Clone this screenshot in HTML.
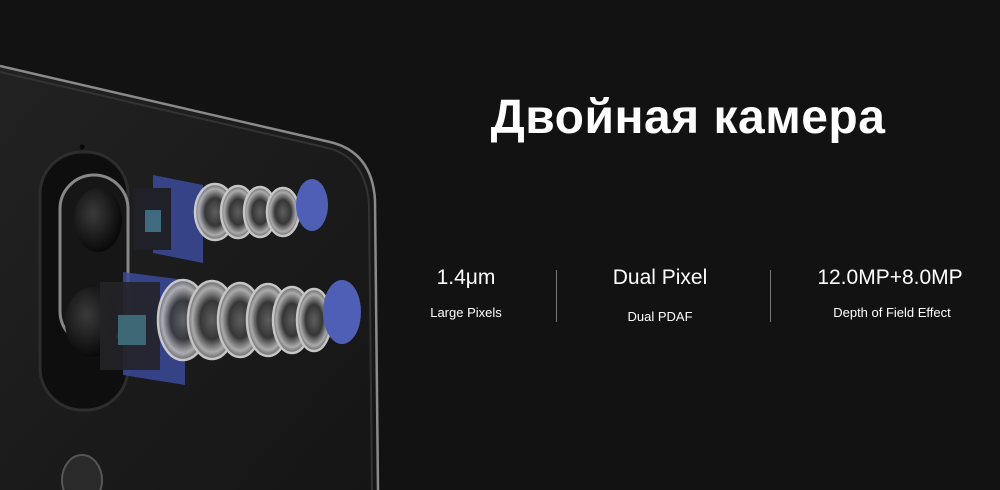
<!DOCTYPE html>
<html><head><meta charset="utf-8"><style>
html,body{margin:0;padding:0;background:#111;}
#w{position:relative;width:1000px;height:490px;overflow:hidden;background:#121212;font-family:"Liberation Sans",sans-serif;color:#fff;}
svg{position:absolute;left:0;top:0}
.t{position:absolute;text-align:center;white-space:nowrap}
h1{position:absolute;left:468px;width:440px;top:90px;margin:0;text-align:center;font-size:48px;font-weight:bold;letter-spacing:0.5px}
.big{font-size:21px;top:266px}
.sm{font-size:13px;top:305px}
.bar{position:absolute;top:270px;width:1px;height:52px;background:#777}
</style></head><body><div id="w">
<svg width="1000" height="490" viewBox="0 0 1000 490">
<defs>
<linearGradient id="ph" x1="0" y1="0" x2="1" y2="1">
<stop offset="0" stop-color="#222"/><stop offset="0.5" stop-color="#1b1b1b"/><stop offset="1" stop-color="#151515"/></linearGradient>
<radialGradient id="ln" cx="0.5" cy="0.5" r="0.55"><stop offset="0" stop-color="#666"/><stop offset="0.45" stop-color="#3a3a3a"/><stop offset="0.75" stop-color="#bbb"/><stop offset="1" stop-color="#444"/></radialGradient>
<radialGradient id="cam" cx="0.4" cy="0.4" r="0.6"><stop offset="0" stop-color="#3a3a3a"/><stop offset="1" stop-color="#0a0a0a"/></radialGradient>
</defs>
<path d="M0 66 L330 142 Q372 152 375 200 L378 490 L0 490 Z" fill="url(#ph)"/>
<path d="M0 66 L330 142 Q372 152 375 200 L378 490" fill="none" stroke="#8a8a8a" stroke-width="2.5"/>
<path d="M0 72 L328 148 Q366 158 369 205 L372 490" fill="none" stroke="#333" stroke-width="2"/>
<rect x="40" y="152" width="88" height="258" rx="42" fill="#0e0e0e" stroke="#2d2d2d" stroke-width="3"/>
<rect x="60" y="175" width="68" height="170" rx="34" fill="#161616" stroke="#888" stroke-width="3"/>
<circle cx="82" cy="147" r="2.5" fill="#080808"/>
<ellipse cx="98" cy="220" rx="24" ry="32" fill="url(#cam)"/>
<ellipse cx="92" cy="322" rx="27" ry="35" fill="url(#cam)"/>
<ellipse cx="82" cy="480" rx="20" ry="25" fill="#2a2a2a" stroke="#555" stroke-width="2"/>
<polygon points="153,175 203,185 203,263 153,253" fill="#3b4a99" opacity="0.85"/>
<rect x="133" y="188" width="38" height="62" fill="#202028"/>
<rect x="145" y="210" width="16" height="22" fill="#3f6a80"/>
<polygon points="123,272 185,280 185,385 123,375" fill="#3b4a99" opacity="0.85"/>
<rect x="100" y="282" width="60" height="88" fill="#232328" opacity="0.9"/>
<rect x="118" y="315" width="28" height="30" fill="#3d6876"/>
<g stroke="#d8d8d8" stroke-width="2.5" fill="url(#ln)" opacity="0.9">
<ellipse cx="215" cy="212" rx="20" ry="28"/>
<ellipse cx="238" cy="212" rx="17" ry="26"/>
<ellipse cx="260" cy="212" rx="16" ry="25"/>
<ellipse cx="283" cy="212" rx="16" ry="24"/>
<ellipse cx="183" cy="320" rx="25" ry="40"/>
<ellipse cx="212" cy="320" rx="24" ry="39"/>
<ellipse cx="240" cy="320" rx="22" ry="37"/>
<ellipse cx="268" cy="320" rx="21" ry="36"/>
<ellipse cx="292" cy="320" rx="19" ry="33"/>
<ellipse cx="314" cy="320" rx="17" ry="31"/>
</g>
<ellipse cx="312" cy="205" rx="16" ry="26" fill="#4f5fb5"/>
<ellipse cx="342" cy="312" rx="19" ry="32" fill="#4f5fb5"/>
</svg>
<h1>Двойная камера</h1>
<div class="t big" style="left:416px;width:100px">1.4μm</div>
<div class="t sm" style="left:416px;width:100px">Large Pixels</div>
<div class="bar" style="left:556px"></div>
<div class="t big" style="left:600px;width:120px">Dual Pixel</div>
<div class="t sm" style="left:600px;width:120px;top:309px">Dual PDAF</div>
<div class="bar" style="left:770px"></div>
<div class="t big" style="left:800px;width:180px">12.0MP+8.0MP</div>
<div class="t sm" style="left:800px;width:184px">Depth of Field Effect</div>
</div></body></html>
